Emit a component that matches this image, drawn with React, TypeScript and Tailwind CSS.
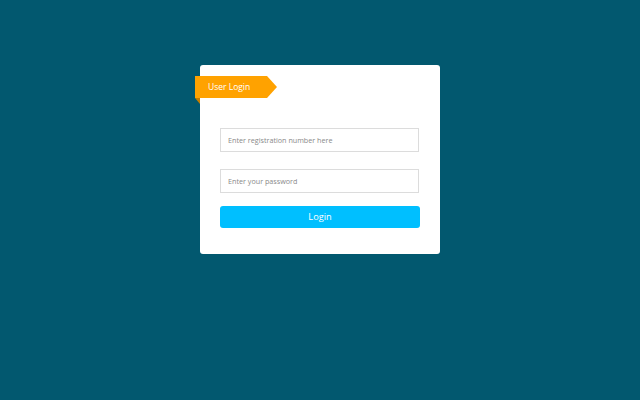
export default function App() {
  return (
    <div
      className="min-h-[400px] w-full bg-[#02586f] pt-[65px]"
      style={{ fontFamily: '"Open Sans", "Noto Sans", sans-serif' }}
    >
      <div className="relative mx-auto w-[240px] rounded-[3px] bg-white px-5 pt-[63px] pb-[26px]">
        {/* ribbon */}
        <div className="absolute -left-[5px] top-[11px]">
          <div className="relative flex h-[22px] w-[72px] items-center bg-[#ffa200] pl-[13px] text-[8.5px] text-white">
            User Login
            <div className="absolute -right-[10px] top-0 h-0 w-0 border-y-[11px] border-l-[10px] border-y-transparent border-l-[#ffa200]" />
          </div>
          <div className="h-0 w-0 border-t-[6px] border-l-[5px] border-t-[#c77e00] border-l-transparent" />
        </div>

        <input
          type="text"
          placeholder="Enter registration number here"
          className="block h-[24px] w-[199px] border border-[#dcdcdc] px-[7px] text-[7.2px] text-gray-700 outline-none placeholder:text-[#8a8a8a]"
        />
        <input
          type="password"
          placeholder="Enter your password"
          className="mt-[17px] block h-[24px] w-[199px] border border-[#dcdcdc] px-[7px] text-[7.2px] text-gray-700 outline-none placeholder:text-[#8a8a8a]"
        />
        <button className="mt-[13px] block h-[22px] w-[200px] rounded-[3px] bg-[#00bfff] text-[9.2px] text-white">
          Login
        </button>
      </div>
    </div>
  )
}
